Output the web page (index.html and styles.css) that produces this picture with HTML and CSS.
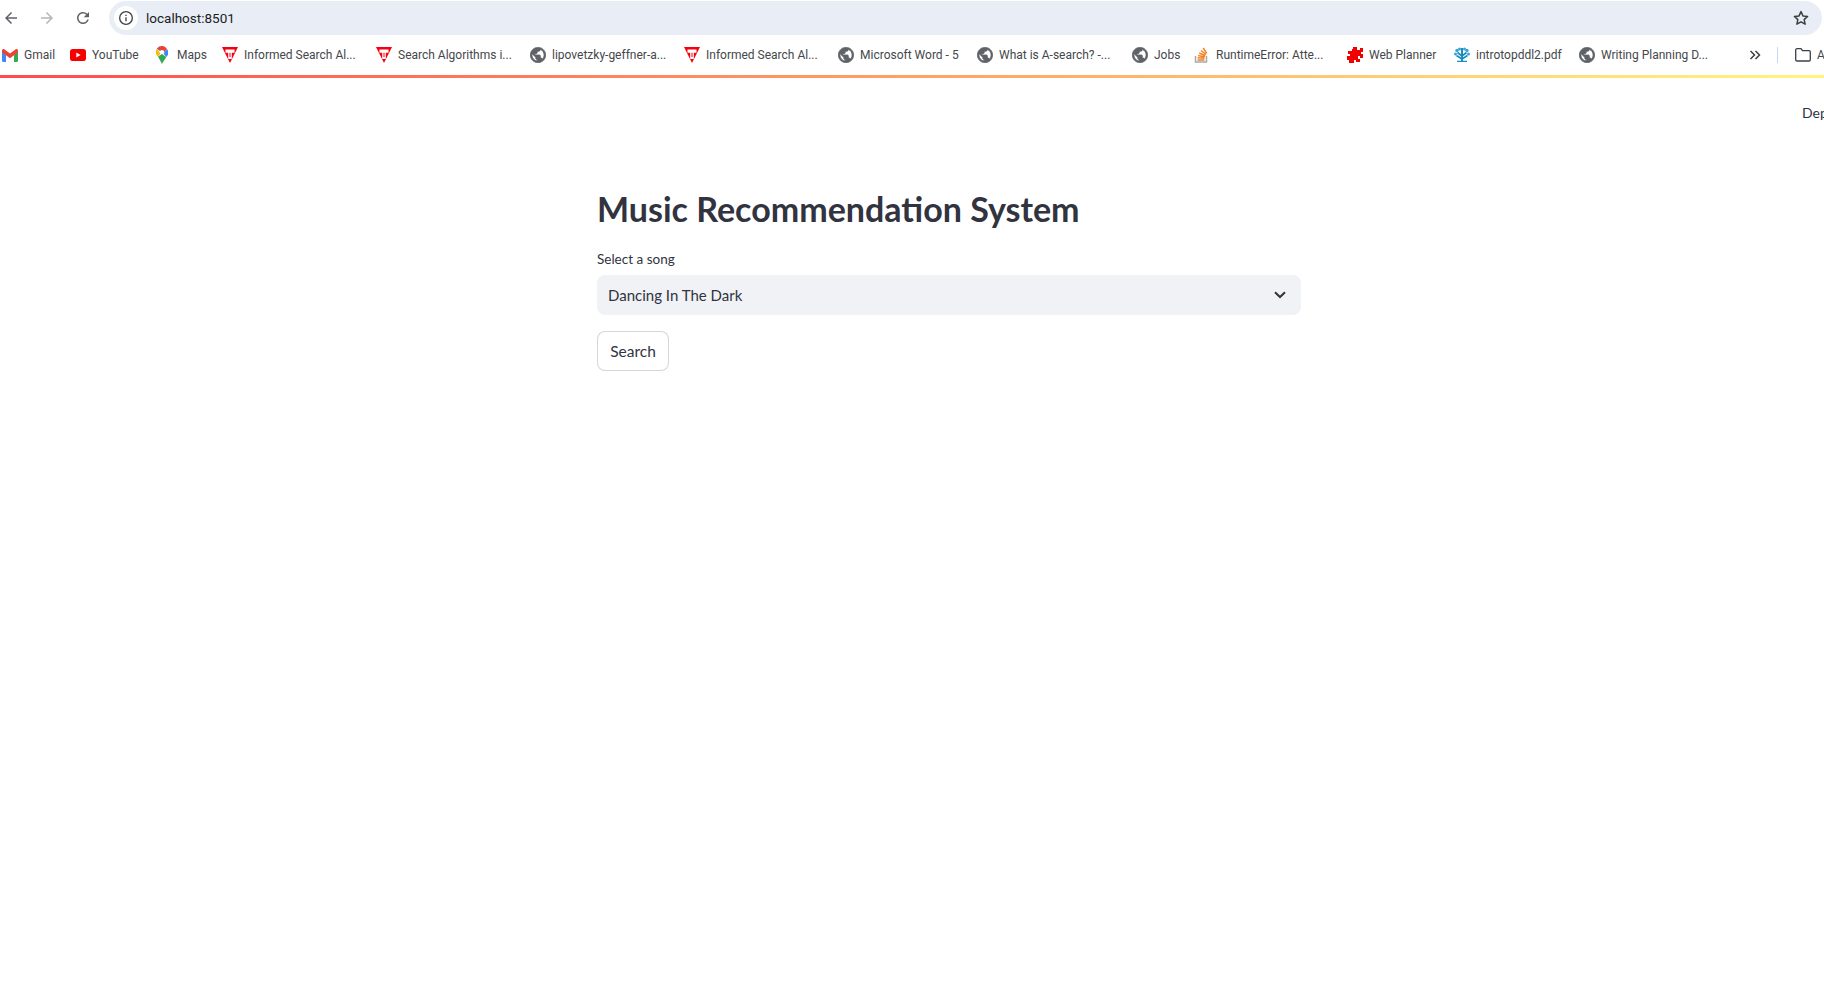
FILE: index.html
```html
<!DOCTYPE html>
<html lang="en">
<head>
<meta charset="utf-8">
<title>Music Recommendation System</title>
<link rel="stylesheet" href="styles.css">
</head>
<body>
<svg class="defs" width="0" height="0" aria-hidden="true">
  <symbol id="globe" viewBox="1.500 1.500 21 21"><path fill="#5f6368" stroke="#5f6368" stroke-width="1.100" d="M12 2C6.48 2 2 6.48 2 12s4.48 10 10 10 10-4.48 10-10S17.52 2 12 2zm-1 17.93c-3.95-.49-7-3.85-7-7.93 0-.62.08-1.21.21-1.79L9 15v1c0 1.1.9 2 2 2v1.93zm6.9-2.54c-.26-.81-1-1.39-1.9-1.39h-1v-3c0-.55-.45-1-1-1H8v-2h2c.55 0 1-.45 1-1V7h2c1.1 0 2-.9 2-2v-.41c2.93 1.19 5 4.06 5 7.41 0 2.08-.8 3.97-2.1 5.39z"/></symbol>
  <symbol id="tri" viewBox="0 0 16 16"><path fill="#f5000f" d="M0 0h16L8 16z"/><path fill="#fff" d="M3.500 2.500h9v3.200H9.800V12H6.200V5.700H3.500z"/><path fill="#f5000f" d="M7.500 5.700h1V10h-1z"/></symbol>
</svg>
<div class="app">
  <header class="toolbar">
    <button class="nav" aria-label="Back"><svg viewBox="0 0 24 24" width="18" height="18"><path fill="#5f6368" d="M20 11H7.830l5.590-5.590L12 4l-8 8 8 8 1.410-1.410L7.830 13H20z"/></svg></button>
    <button class="nav" aria-label="Forward"><svg viewBox="0 0 24 24" width="18" height="18"><path fill="#b4b6b9" d="M4 11h12.170l-5.590-5.590L12 4l8 8-8 8-1.410-1.410L16.170 13H4z"/></svg></button>
    <button class="nav" aria-label="Reload"><svg viewBox="0 0 24 24" width="18" height="18"><path fill="#5f6368" d="M17.650 6.350A7.958 7.958 0 0 0 12 4c-4.420 0-7.990 3.580-7.990 8s3.570 8 7.990 8c3.730 0 6.840-2.550 7.730-6h-2.080A5.990 5.990 0 0 1 12 18c-3.310 0-6-2.690-6-6s2.690-6 6-6c1.660 0 3.140.69 4.220 1.780L13 11h7V4z"/></svg></button>
    <div class="omnibox">
      <span class="chip"><svg viewBox="0 0 24 24" width="16" height="16"><circle cx="12" cy="12" r="9.500" fill="none" stroke="#3c4043" stroke-width="2"/><path fill="#3c4043" d="M11 11h2v6h-2zm0-4h2v2h-2z"/></svg></span>
      <span class="url">localhost:8501</span>
      <svg class="star" viewBox="0 0 24 24" width="18" height="18"><path fill="none" stroke="#3c4043" stroke-width="2" stroke-linejoin="round" d="M12 3.500l2.600 5.700 6.200.7-4.600 4.200 1.300 6.100L12 17.100l-5.500 3.100 1.300-6.100L3.200 9.900l6.200-.7z"/></svg>
    </div>
  </header>

  <nav class="bookmarks">
    <a class="bm"><svg class="ico gmail" viewBox="0 0 16 13"><path fill="#4285f4" d="M0 2.500v9.300c0 .6.500 1.200 1.200 1.200H4V6z"/><path fill="#34a853" d="M12 6v7h2.800c.7 0 1.200-.6 1.200-1.200V2.500z"/><path fill="#ea4335" d="M0 1.700C0 .4 1.500-.4 2.600.4L8 4.500 13.400.4C14.500-.4 16 .4 16 1.700v1.500L12 6.200 8 9.200 4 6.200 0 3.200z"/></svg><span>Gmail</span></a>
    <a class="bm"><svg class="ico" viewBox="0 0 16 12"><rect width="16" height="12" rx="2.800" fill="#f70000"/><path fill="#fff" d="M6.300 3.500v5L10.600 6z"/></svg><span>YouTube</span></a>
    <a class="bm"><svg class="ico maps" viewBox="0 0 12 18"><path fill="#34a853" d="M2 10.500 6 18c1-2.400 3-4.800 4.300-7L6 8z"/><path fill="#4285f4" d="M3.500.6A6 6 0 0 0 .9 2.800L6 6.500 8.300 4z"/><path fill="#ea4335" d="M3.500.6A6 6 0 0 1 11 3L8 6.500C8 4.500 6 3.500 4.300 4.300L.9 2.800"/><path fill="#fbbc04" d="M.9 2.800A6 6 0 0 0 2 10.500L4.500 7.500z"/><path fill="#4285f4" d="M11 3a6 6 0 0 1-.7 8L7.500 7.500z"/><circle cx="6" cy="6" r="2.100" fill="#fff"/></svg><span>Maps</span></a>
    <a class="bm"><svg class="ico"><use href="#tri"/></svg><span>Informed Search Al...</span></a>
    <a class="bm"><svg class="ico"><use href="#tri"/></svg><span>Search Algorithms i...</span></a>
    <a class="bm"><svg class="ico"><use href="#globe"/></svg><span>lipovetzky-geffner-a...</span></a>
    <a class="bm"><svg class="ico"><use href="#tri"/></svg><span>Informed Search Al...</span></a>
    <a class="bm"><svg class="ico"><use href="#globe"/></svg><span>Microsoft Word - 5</span></a>
    <a class="bm"><svg class="ico"><use href="#globe"/></svg><span>What is A-search? -...</span></a>
    <a class="bm"><svg class="ico"><use href="#globe"/></svg><span>Jobs</span></a>
    <a class="bm"><svg class="ico" viewBox="0 0 16 16"><path fill="none" stroke="#a9a9a9" stroke-width="1.500" d="M1.500 9v6h11V9"/><path fill="none" stroke="#f48024" stroke-width="1.500" d="M3.500 13h7M3.600 10.800l6.800.5M4.200 8.500l6.500 1.600M5.300 6l6 2.800M7 3.500l5 4M9.200 1l3.500 5.300"/></svg><span>RuntimeError: Atte...</span></a>
    <a class="bm"><svg class="ico" viewBox="0 0 16 16"><path fill="#f00000" d="M6 0h4v3h3V1h3v4h-2v2h2v4h-3V9h-2v3h2v3H9v-2H7v3H2v-3H0V9h3V7H1V4h4V2H6z"/></svg><span>Web Planner</span></a>
    <a class="bm"><svg class="ico" viewBox="0 0 16 16"><path fill="#1d8dbd" d="M7 1h2v14H7zM3 13.800h10V15H3z"/><path fill="none" stroke="#1d8dbd" stroke-width="1.700" d="M8 9 3.500 5.500M8 9l4.500-3.500M8 12 2.500 8.500M8 12l5.500-3.500"/><circle cx="3" cy="3.500" r="1.700" fill="#3aa5d2"/><circle cx="13" cy="3.500" r="1.700" fill="#3aa5d2"/><circle cx="5.500" cy="2" r="1.500" fill="#3aa5d2"/><circle cx="10.500" cy="2" r="1.500" fill="#3aa5d2"/><circle cx="1.500" cy="7" r="1.500" fill="#3aa5d2"/><circle cx="14.500" cy="7" r="1.500" fill="#3aa5d2"/></svg><span>introtopddl2.pdf</span></a>
    <a class="bm"><svg class="ico"><use href="#globe"/></svg><span>Writing Planning D...</span></a>
    <a class="bm more" aria-label="More"><svg viewBox="0 0 12 12" width="12" height="12"><path fill="none" stroke="#3c4043" stroke-width="1.500" d="M1.500 2 5.500 6l-4 4M6.500 2l4 4-4 4"/></svg></a>
    <span class="sep"></span>
    <a class="bm"><svg class="ico" viewBox="0 0 16 14"><path fill="none" stroke="#3c4043" stroke-width="1.300" d="M.7 2c0-.7.500-1.300 1.300-1.300h4l1.500 2H14c.7 0 1.300.6 1.300 1.300v7.700c0 .7-.6 1.300-1.300 1.300H2c-.8 0-1.300-.6-1.300-1.300z"/></svg><span>All Bookmarks</span></a>
  </nav>

  <div class="decoration"></div>

  <div class="stage">
    <div class="deploy"><span>Deploy</span></div>
    <main class="block">
      <h1 class="title">Music Recommendation System</h1>
      <label class="label">Select a song</label>
      <div class="select">
        <span>Dancing In The Dark</span>
        <svg viewBox="0 0 12 8" width="12" height="8"><path fill="none" stroke="#31333f" stroke-width="2" d="M1 1.200 6 6l5-4.800"/></svg>
      </div>
      <button class="btn">Search</button>
    </main>
  </div>
</div>
</body>
</html>
```
FILE: styles.css
```css
* { box-sizing: border-box; }
html, body { margin: 0; height: 100%; overflow: hidden; background: #fff; }
.defs { display: block; height: 0; }
.app {
  width: 1824px;
  height: 983px;
  overflow: hidden;
  display: flex;
  flex-direction: column;
  font-family: "Lato", "Noto Sans", sans-serif;
  color: #31333f;
}
.toolbar {
  height: 36px;
  flex: none;
  display: flex;
  gap: 18px;
  padding: 1px 0 0 2px;
  align-items: flex-start;
}
.nav {
  width: 18px;
  height: 34px;
  padding: 0;
  border: 0;
  background: none;
  display: flex;
  align-items: center;
  justify-content: center;
}
.omnibox {
  flex: 1;
  height: 34px;
  margin: 0 2px 0 -1px;
  border-radius: 17px;
  background: #e9edf6;
  display: flex;
  align-items: center;
  padding: 0 12px 0 5px;
}
.chip {
  width: 24px;
  height: 24px;
  border-radius: 50%;
  background: #fff;
  display: flex;
  align-items: center;
  justify-content: center;
}
.url {
  margin-left: 8px;
  font: 13.500px "Roboto", sans-serif;
  color: #202124;
  flex: 1;
}
.bookmarks {
  height: 39px;
  flex: none;
  display: grid;
  grid-template-columns: 68px 86px 66px 154px 154px 154px 154px 139px 155px 62px 153px 107px 125px 170px 28px 18px 40px;
  padding: 0 0 1px 2px;
  align-items: center;
  font: 12px "Roboto", sans-serif;
  color: #45474b;
  white-space: nowrap;
}
.bm { display: flex; align-items: center; gap: 6px; overflow: hidden; }
.ico { width: 16px; height: 16px; flex: none; }
.gmail { height: 13px; }
.maps { width: 12px; height: 18px; margin-right: 3px; }
.sep { width: 1px; height: 16px; background: #c9d7f2; }
.decoration {
  width: 1898px;
  height: 3px;
  flex: none;
  background: linear-gradient(90deg, #ff4b4b, #fffd80);
}
.stage {
  width: 1898px;
  flex: 1;
  display: flex;
  flex-direction: column;
  align-items: center;
}
.deploy {
  align-self: flex-end;
  padding-top: 25px;
  width: 96px;
  height: 45px;
  font-size: 14px;
  line-height: 20px;
}
.block { width: 704px; display: flex; flex-direction: column; align-items: flex-start; }
.title {
  margin: 59px 0 0;
  font-size: 34px;
  line-height: 54px;
  font-weight: 700;
  color: #31333f;
  white-space: nowrap;
}
.label { margin-top: 13px; font-size: 13.500px; line-height: 20px; }
.select {
  margin-top: 6px;
  width: 100%;
  height: 40px;
  border-radius: 8px;
  background: #f0f2f6;
  padding: 0 15px 0 11px;
  display: flex;
  align-items: center;
  justify-content: space-between;
  font-size: 15px;
}
.btn {
  margin-top: 16px;
  width: 72px;
  height: 40px;
  border: 1px solid rgba(49, 51, 63, .2);
  border-radius: 8px;
  background: #fff;
  font-family: inherit;
  font-size: 15.500px;
  color: #31333f;
  padding: 0;
}
```
